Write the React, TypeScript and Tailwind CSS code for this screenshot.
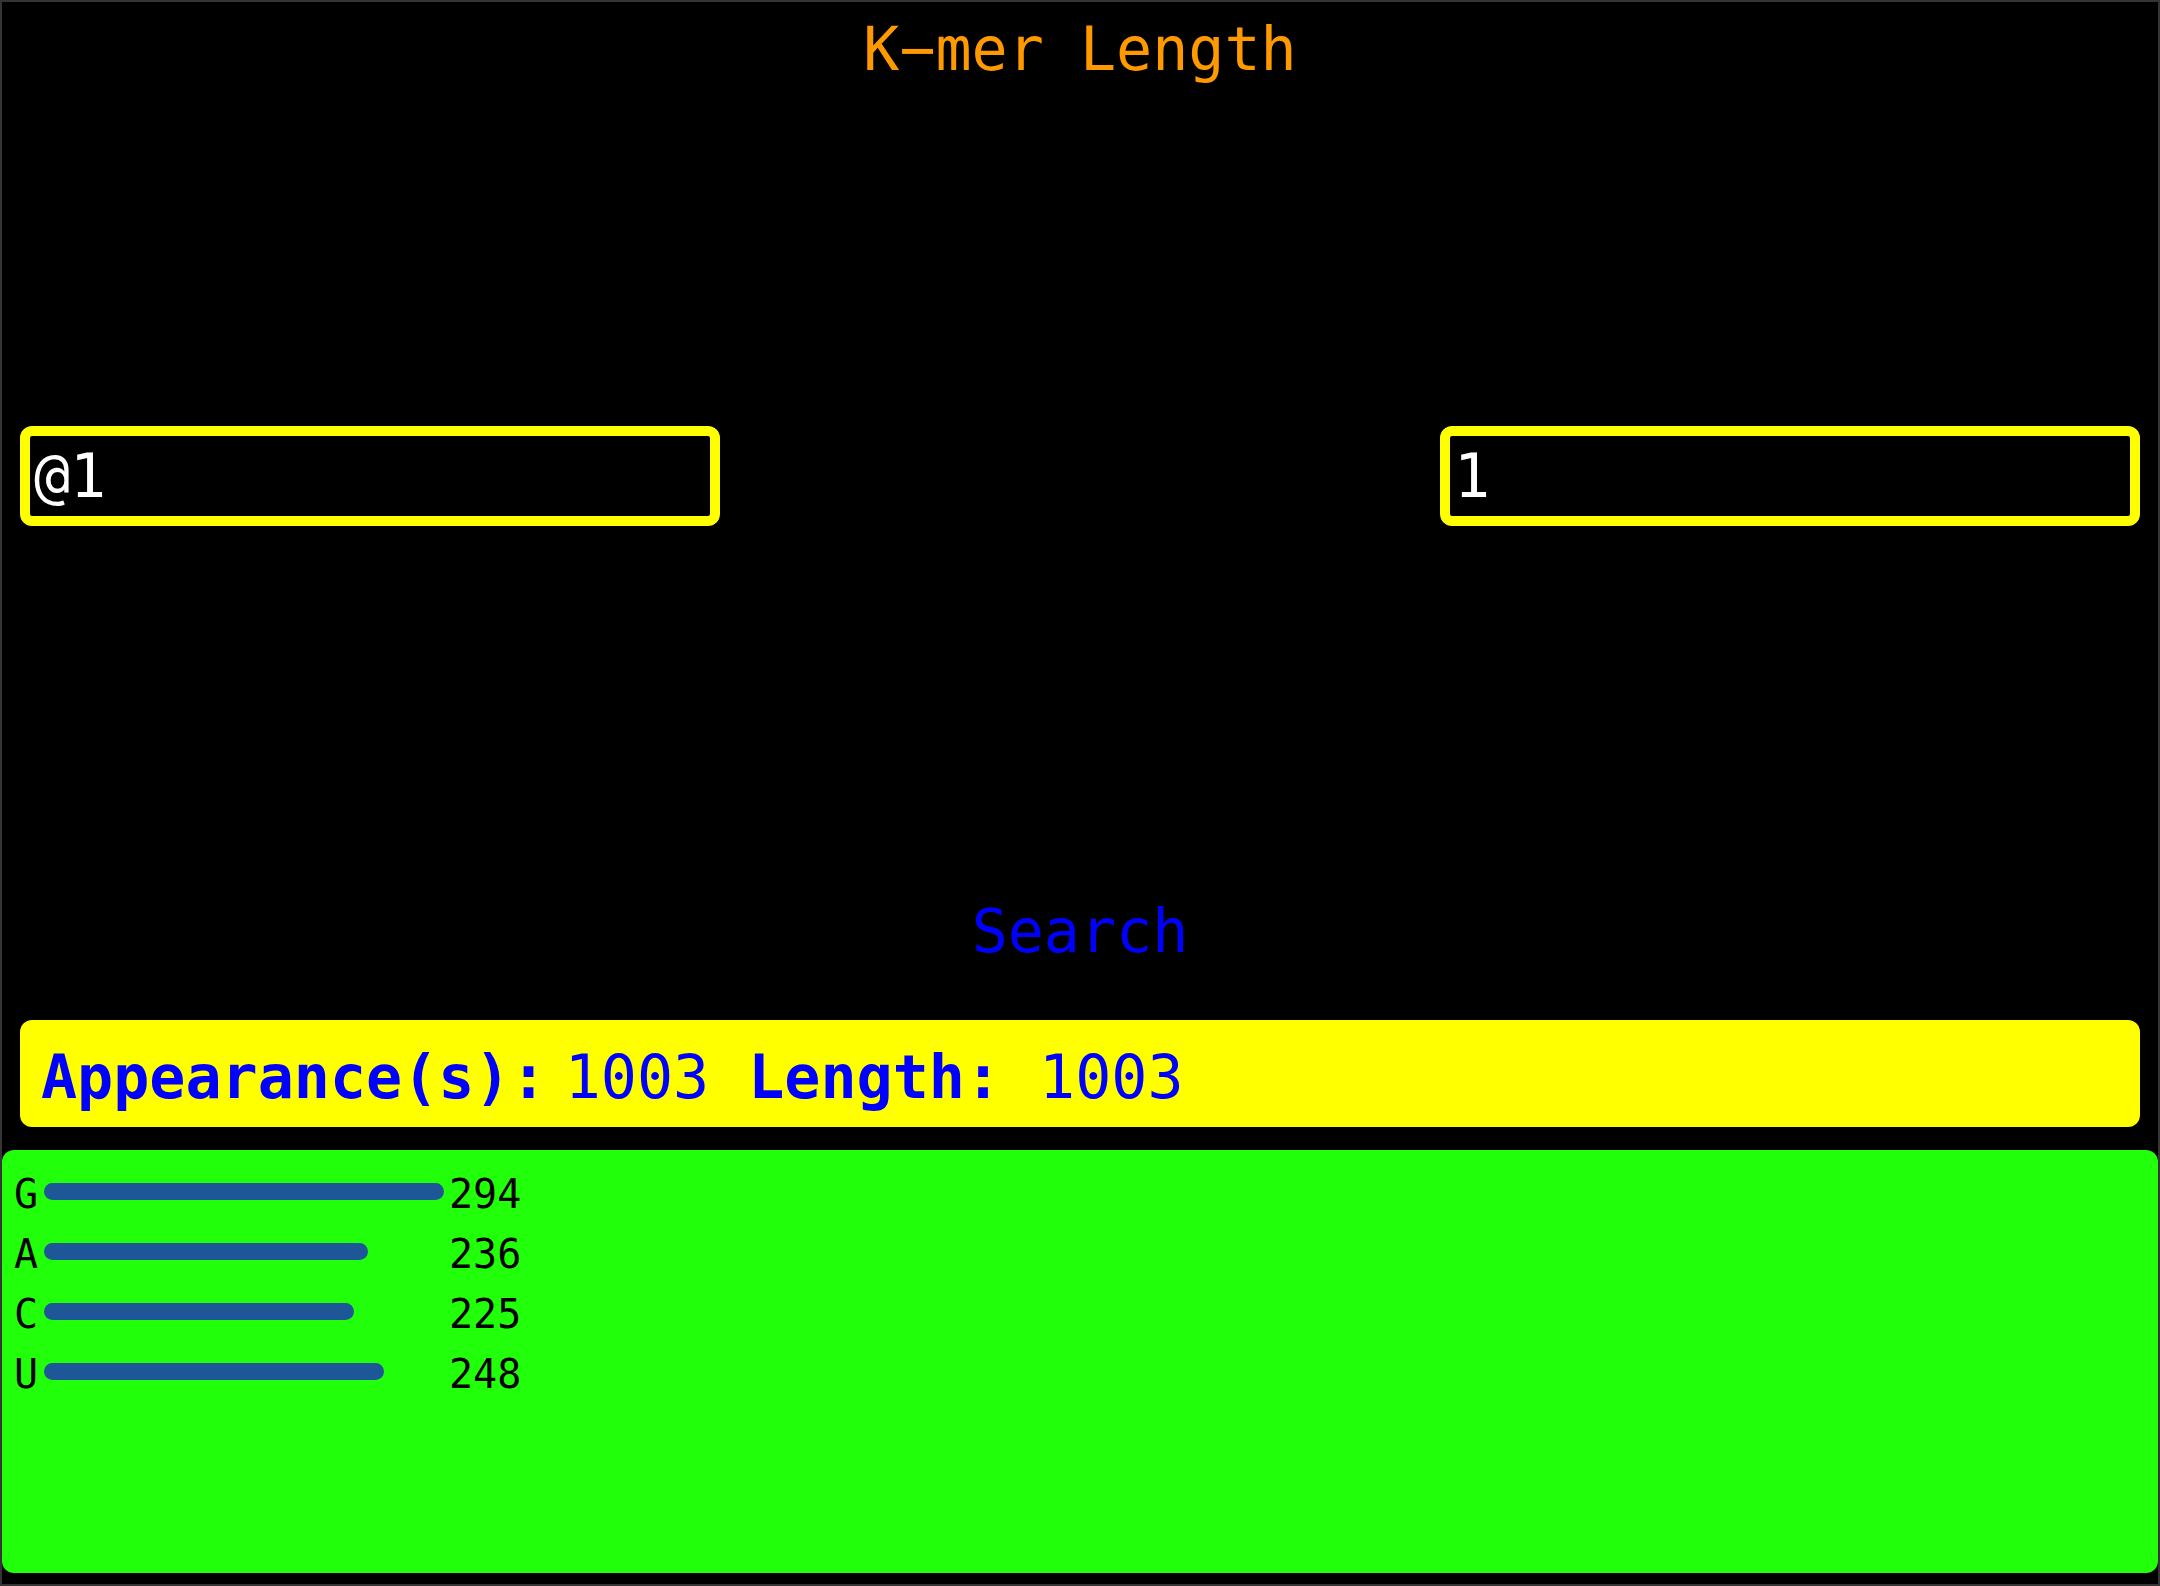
import { useState } from "react";

const counts = [
  { base: "G", n: 294, w: 400 },
  { base: "A", n: 236, w: 324 },
  { base: "C", n: 225, w: 310 },
  { base: "U", n: 248, w: 340 },
];

export default function App() {
  const [seq, setSeq] = useState("@1");
  const [k, setK] = useState("1");

  return (
    <div className="h-screen bg-black border-2 border-[#353535] flex flex-col font-['DejaVu_Sans_Mono',monospace]">
      <h1 className="pt-[12px] text-center text-[60px] leading-[70px] text-[#ff9900]">K−mer Length</h1>

      <div className="mt-[342px] flex justify-between px-[18px]">
        <input value={seq} onChange={(e) => setSeq(e.target.value)}
          className="w-[700px] h-[100px] border-[10px] border-[#ffff00] rounded-[12px] bg-black text-white text-[60px] px-[4px] outline-none" />
        <input value={k} onChange={(e) => setK(e.target.value)}
          className="w-[700px] h-[100px] border-[10px] border-[#ffff00] rounded-[12px] bg-black text-white text-[60px] px-[4px] outline-none" />
      </div>

      <button className="mt-[370px] self-center text-[60px] leading-[70px] text-[#0000ff]">Search</button>

      <div className="mt-[54px] mx-[18px] h-[107px] rounded-[12px] bg-[#ffff00] pl-[21px] pt-[22px] text-[60px] leading-[70px] text-[#0000ff] whitespace-pre">
        <b>Appearance(s):</b>
        <span className="ml-[18px]">1003</span>
        <b className="ml-[39px]">Length:</b>
        <span className="ml-[38px]">1003</span>
      </div>

      <div className="mt-[23px] h-[423px] rounded-[12px] bg-[#22ff0a] pl-[12px] pt-[14px] text-black text-[40px]">
        {counts.map((c) => (
          <div key={c.base} className="flex items-center h-[60px]">
            <span className="w-[24px]">{c.base}</span>
            <div className="ml-[6px] w-[405px] mb-[5px]">
              <div className="h-[17px] rounded-full bg-[#1e5797]" style={{ width: c.w }} />
            </div>
            <span>{c.n}</span>
          </div>
        ))}
      </div>
    </div>
  );
}
